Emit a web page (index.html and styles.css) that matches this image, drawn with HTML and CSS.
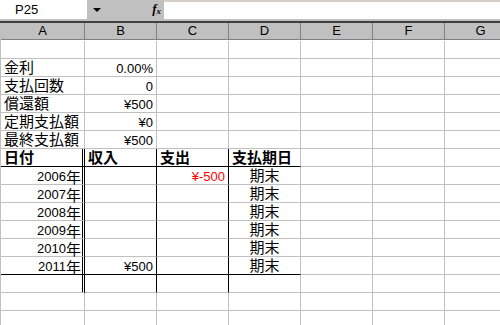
FILE: index.html
```html
<!DOCTYPE html>
<html lang="ja">
<head>
  <meta charset="UTF-8" />
  <title>支払計算</title>
  <link rel="stylesheet" href="styles.css">
</head>
<body>
  <div class="formula-bar">
    <div class="name-box">P25</div>
    <div class="fx-area"><span class="drop"></span><span class="fx">f<sub>x</sub></span></div>
    <div class="formula"></div>
  </div>
  <div class="bar-strip"></div>

  <div class="sheet">
    <div class="col-head">A</div><div class="col-head">B</div><div class="col-head">C</div><div class="col-head">D</div><div class="col-head">E</div><div class="col-head">F</div><div class="col-head">G</div>

    <div class="c"></div><div class="c"></div><div class="c"></div><div class="c"></div><div class="c"></div><div class="c"></div><div class="c"></div>

    <div class="c jp">金利</div><div class="c r">0.00%</div><div class="c"></div><div class="c"></div><div class="c"></div><div class="c"></div><div class="c"></div>
    <div class="c jp">支払回数</div><div class="c r">0</div><div class="c"></div><div class="c"></div><div class="c"></div><div class="c"></div><div class="c"></div>
    <div class="c jp">償還額</div><div class="c r">¥500</div><div class="c"></div><div class="c"></div><div class="c"></div><div class="c"></div><div class="c"></div>
    <div class="c jp">定期支払額</div><div class="c r">¥0</div><div class="c"></div><div class="c"></div><div class="c"></div><div class="c"></div><div class="c"></div>
    <div class="c jp">最終支払額</div><div class="c r">¥500</div><div class="c"></div><div class="c"></div><div class="c"></div><div class="c"></div><div class="c"></div>

    <div class="c jp hd dbl bb">日付</div><div class="c jp hd bk bb">収入</div><div class="c jp hd bk bb">支出</div><div class="c jp hd bb">支払期日</div><div class="c"></div><div class="c"></div><div class="c"></div>

    <div class="c r dbl">2006<span class="jp">年</span></div><div class="c bk"></div><div class="c r bk red">¥-500</div><div class="c jp ctr">期末</div><div class="c"></div><div class="c"></div><div class="c"></div>
    <div class="c r dbl">2007<span class="jp">年</span></div><div class="c bk"></div><div class="c bk"></div><div class="c jp ctr">期末</div><div class="c"></div><div class="c"></div><div class="c"></div>
    <div class="c r dbl">2008<span class="jp">年</span></div><div class="c bk"></div><div class="c bk"></div><div class="c jp ctr">期末</div><div class="c"></div><div class="c"></div><div class="c"></div>
    <div class="c r dbl">2009<span class="jp">年</span></div><div class="c bk"></div><div class="c bk"></div><div class="c jp ctr">期末</div><div class="c"></div><div class="c"></div><div class="c"></div>
    <div class="c r dbl">2010<span class="jp">年</span></div><div class="c bk"></div><div class="c bk"></div><div class="c jp ctr">期末</div><div class="c"></div><div class="c"></div><div class="c"></div>
    <div class="c r dbl bb">2011<span class="jp">年</span></div><div class="c r bk bb">¥500</div><div class="c bk bb"></div><div class="c jp ctr bb">期末</div><div class="c"></div><div class="c"></div><div class="c"></div>

    <div class="c dbl"></div><div class="c bk"></div><div class="c bk"></div><div class="c"></div><div class="c"></div><div class="c"></div><div class="c"></div>

    <div class="c"></div><div class="c"></div><div class="c"></div><div class="c"></div><div class="c"></div><div class="c"></div><div class="c"></div>
    <div class="c"></div><div class="c"></div><div class="c"></div><div class="c"></div><div class="c"></div><div class="c"></div><div class="c"></div>
  </div>
</body>
</html>
```

FILE: styles.css
```css
* { box-sizing: border-box; margin: 0; padding: 0; }
body { font-family: 'Liberation Sans', 'Noto Sans CJK JP', sans-serif; font-size: 13px; background: #fff; color: #000; overflow: hidden; width: 500px; height: 325px; }

/* formula bar */
.formula-bar { display: flex; height: 19px; }
.name-box { width: 87px; background: #fff; padding-left: 15px; line-height: 19px; }
.fx-area { width: 77px; background: #c0c0c0; display: flex; align-items: center; justify-content: space-between; padding: 0 3px 0 6px; }
.drop { width: 0; height: 0; border-left: 4px solid transparent; border-right: 4px solid transparent; border-top: 4px solid #000; }
.fx { font-family: 'Liberation Serif', serif; font-style: italic; font-weight: bold; font-size: 13px; line-height: 13px; }
.fx sub { font-size: 9px; vertical-align: -1px; }
.formula { flex: 1; background: #fff; border-top: 2px solid #d4d0c8; }
.bar-strip { height: 4px; background: #c0c0c0; border-bottom: 2px solid #404040; }

/* sheet grid */
.sheet {
  display: grid;
  grid-template-columns: 84px repeat(6, 72px);
  grid-auto-rows: 18px;
  border-left: 1px solid #c0c0c0;
}

.col-head {
  height: 17px;
  background: #c0c0c0;
  border-right: 1px solid #808080;
  border-bottom: 1px solid #808080;
  text-align: center;
  line-height: 16px;
  font-size: 13px;
}

.c {
  display: flex;
  align-items: flex-end;
  padding: 0 3px;
  line-height: 15px;
  white-space: nowrap;
  border-right: 1px solid #c0c0c0;
  border-bottom: 1px solid #c0c0c0;
}

.jp { font-family: 'Noto Sans CJK JP', sans-serif; font-size: 15px; }
.c.jp { padding-bottom: 2px; }
.r { justify-content: flex-end; }
.ctr { justify-content: center; }
.hd { font-weight: bold; }
.red { color: #f00; }

.dbl { border-right: 3px double #000; padding-right: 1px; }
.bk { border-right-color: #000; }
.bb { border-bottom-color: #000; }
```
